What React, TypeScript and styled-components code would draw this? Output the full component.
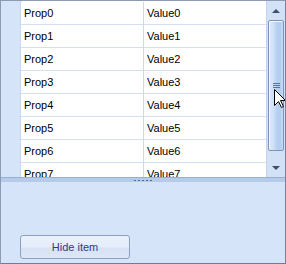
import styled, { createGlobalStyle } from "styled-components";

const GlobalStyle = createGlobalStyle`
  html, body {
    margin: 0;
    padding: 0;
    background: #ffffff;
  }
`;

const Frame = styled.div`
  position: relative;
  width: 286px;
  height: 264px;
  box-sizing: border-box;
  border: 1px solid #8c9bb2;
  border-right-color: #6f84a5;
  border-bottom-color: #6a7fa0;
  background: #d5e4f8;
  display: flex;
  flex-direction: column;
  font-family: "Liberation Sans", Arial, sans-serif;
  font-size: 11px;
  overflow: hidden;
`;

const GridArea = styled.div`
  height: 176px;
  display: flex;
  overflow: hidden;
  background: #ffffff;
`;

const Rows = styled.div`
  flex: 1;
  display: flex;
  flex-direction: column;
  padding-top: 1px;
  overflow: hidden;
  background: linear-gradient(to right, #d5e4f8 20px, #c7d7ee 20px, #c7d7ee 21px, #ffffff 21px);
`;

const Row = styled.div`
  display: grid;
  grid-template-columns: 20px 123px 1fr;
  height: 23px;
  flex-shrink: 0;
`;

const Margin = styled.div`
  background: #d5e4f8;
  border-right: 1px solid #c7d7ee;
`;

const Cell = styled.div<{ $last?: boolean }>`
  display: flex;
  align-items: center;
  padding-left: 3px;
  color: #000000;
  background: #ffffff;
  border-bottom: 1px solid #d3e0f2;
  border-right: ${(p) => (p.$last ? "none" : "1px solid #c9d9f0")};
  white-space: nowrap;
`;

const ScrollBar = styled.div`
  width: 19px;
  display: flex;
  flex-direction: column;
  background: #d2e1f6;
  border-left: 1px solid #c3d4ec;
  box-sizing: border-box;
`;

const ArrowButton = styled.div`
  height: 19px;
  display: flex;
  align-items: center;
  justify-content: center;
  flex-shrink: 0;
`;

const Triangle = styled.div<{ $down?: boolean }>`
  width: 0;
  height: 0;
  border-left: 4px solid transparent;
  border-right: 4px solid transparent;
  ${(p) =>
    p.$down
      ? "border-top: 4px solid #3e4f6b;"
      : "border-bottom: 4px solid #3e4f6b;"}
`;

const Track = styled.div`
  flex: 1;
  padding: 0 1px;
  display: flex;
  flex-direction: column;
`;

const Thumb = styled.div`
  height: 131px;
  box-sizing: border-box;
  border: 1px solid #7f93b4;
  border-radius: 2px;
  box-shadow: inset 1px 1px 0 #f3f8ff;
  background: linear-gradient(
    to right,
    #dde9f9 0%,
    #d0e2f8 30%,
    #b8d1f2 55%,
    #b2cdf0 80%,
    #c8dbf5 100%
  );
  display: flex;
  align-items: center;
  justify-content: center;
`;

const Grip = styled.div`
  width: 7px;
  height: 5px;
  background: repeating-linear-gradient(
    to bottom,
    #5d7397 0px,
    #5d7397 1px,
    transparent 1px,
    transparent 2px
  );
`;

const Splitter = styled.div`
  height: 5px;
  box-sizing: border-box;
  border-top: 1px solid #98afd0;
  background: #b6cbe8;
  display: flex;
  justify-content: center;
  align-items: center;
`;

const Dots = styled.div`
  width: 19px;
  height: 1px;
  background: repeating-linear-gradient(
    to right,
    #4d6da0 0px,
    #4d6da0 2px,
    transparent 2px,
    transparent 4px
  );
`;

const Panel = styled.div`
  flex: 1;
  display: flex;
  align-items: flex-end;
  padding: 0 0 4px 19px;
  background: #d5e4f8;
`;

const Button = styled.button`
  width: 110px;
  height: 24px;
  box-sizing: border-box;
  border: 1px solid #8ca1c2;
  border-radius: 3px;
  background: linear-gradient(
    to bottom,
    #eaf1fc 0%,
    #e4edfa 50%,
    #d6e3f5 55%,
    #dce7f7 100%
  );
  color: #2f3a8c;
  font-family: "Liberation Sans", Arial, sans-serif;
  font-size: 11px;
  padding: 0;
`;

const Cursor = styled.svg`
  position: absolute;
  left: 273px;
  top: 88px;
`;

const items = Array.from({ length: 8 }, (_, i) => i);

export default function App() {
  return (
    <>
      <GlobalStyle />
      <Frame>
        <GridArea>
          <Rows>
            {items.map((i) => (
              <Row key={i}>
                <Margin />
                <Cell>Prop{i}</Cell>
                <Cell $last>Value{i}</Cell>
              </Row>
            ))}
          </Rows>
          <ScrollBar>
            <ArrowButton>
              <Triangle />
            </ArrowButton>
            <Track>
              <Thumb>
                <Grip />
              </Thumb>
            </Track>
            <ArrowButton>
              <Triangle $down />
            </ArrowButton>
          </ScrollBar>
        </GridArea>
        <Splitter>
          <Dots />
        </Splitter>
        <Panel>
          <Button>Hide item</Button>
        </Panel>
        <Cursor width="13" height="20" viewBox="0 0 13 20">
          <path
            d="M0.5 0.5 L0.5 16.5 L4.5 12.5 L7.5 18.5 L9.5 17.5 L6.5 11.5 L11.5 11.5 Z"
            fill="#ffffff"
            stroke="#000000"
            strokeWidth="1"
          />
        </Cursor>
      </Frame>
    </>
  );
}
